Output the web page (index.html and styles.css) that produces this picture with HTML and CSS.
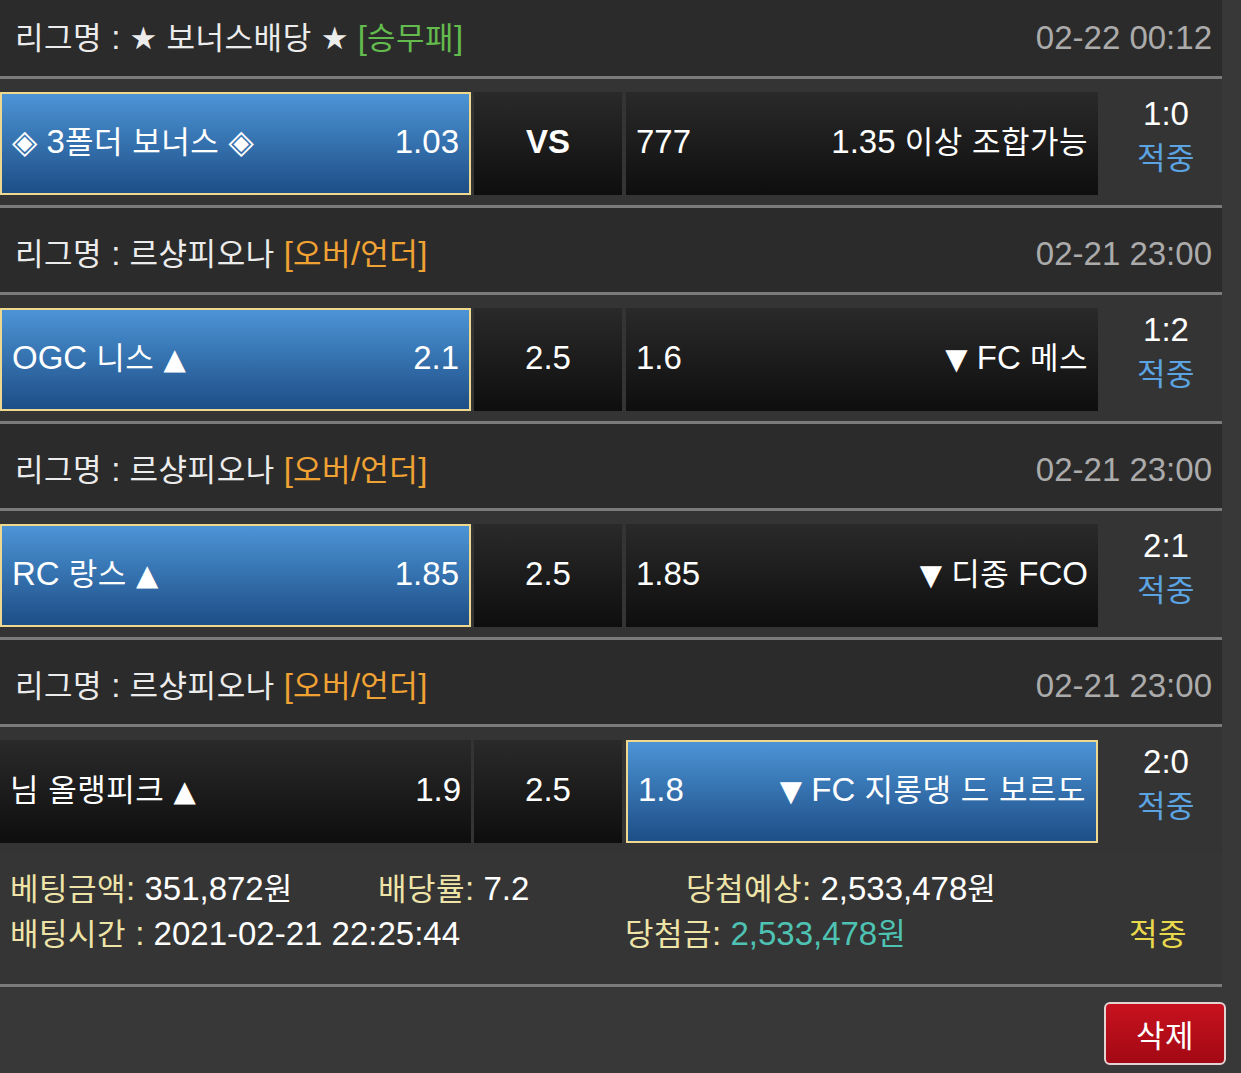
FILE: index.html
```html
<!DOCTYPE html>
<html lang="ko">
<head>
<meta charset="utf-8">
<title>베팅내역</title>
<link rel="stylesheet" href="styles.css">
</head>
<body>
<div class="wrap">
  <div class="league first">
    <div class="lname"><span class="k">리그명</span> : <span class="sym star">★</span> <span class="k">보너스배당</span> <span class="sym star">★</span> <span class="green">[<span class="k">승무패</span>]</span></div>
    <div class="ldate">02-22 00:12</div>
  </div>
  <div class="sep"></div>
  <div class="match">
    <div class="cell c1 sel"><span><span class="sym dia">◈</span> 3<span class="k">폴더 보너스</span> <span class="sym dia">◈</span></span><span>1.03</span></div>
    <div class="cell c2"><b>VS</b></div>
    <div class="cell c3"><span>777</span><span>1.35 <span class="k">이상 조합가능</span></span></div>
    <div class="res"><div>1:0</div><div class="blue"><span class="k">적중</span></div></div>
  </div>
  <div class="sep"></div>

  <div class="league">
    <div class="lname"><span class="k">리그명</span> : <span class="k">르샹피오나</span> <span class="orange">[<span class="k">오버</span>/<span class="k">언더</span>]</span></div>
    <div class="ldate">02-21 23:00</div>
  </div>
  <div class="sep"></div>
  <div class="match">
    <div class="cell c1 sel"><span>OGC <span class="k">니스</span> <span class="sym">▲</span></span><span>2.1</span></div>
    <div class="cell c2"><span>2.5</span></div>
    <div class="cell c3"><span>1.6</span><span><span class="sym">▼</span> FC <span class="k">메스</span></span></div>
    <div class="res"><div>1:2</div><div class="blue"><span class="k">적중</span></div></div>
  </div>
  <div class="sep"></div>

  <div class="league">
    <div class="lname"><span class="k">리그명</span> : <span class="k">르샹피오나</span> <span class="orange">[<span class="k">오버</span>/<span class="k">언더</span>]</span></div>
    <div class="ldate">02-21 23:00</div>
  </div>
  <div class="sep"></div>
  <div class="match">
    <div class="cell c1 sel"><span>RC <span class="k">랑스</span> <span class="sym">▲</span></span><span>1.85</span></div>
    <div class="cell c2"><span>2.5</span></div>
    <div class="cell c3"><span>1.85</span><span><span class="sym">▼</span> <span class="k">디종</span> FCO</span></div>
    <div class="res"><div>2:1</div><div class="blue"><span class="k">적중</span></div></div>
  </div>
  <div class="sep"></div>

  <div class="league">
    <div class="lname"><span class="k">리그명</span> : <span class="k">르샹피오나</span> <span class="orange">[<span class="k">오버</span>/<span class="k">언더</span>]</span></div>
    <div class="ldate">02-21 23:00</div>
  </div>
  <div class="sep"></div>
  <div class="match">
    <div class="cell c1"><span><span class="k">님 올랭피크</span> <span class="sym">▲</span></span><span>1.9</span></div>
    <div class="cell c2"><span>2.5</span></div>
    <div class="cell c3 sel"><span>1.8</span><span><span class="sym">▼</span> FC <span class="k">지롱댕 드 보르도</span></span></div>
    <div class="res"><div>2:0</div><div class="blue"><span class="k">적중</span></div></div>
  </div>

  <div class="summary">
    <div class="srow">
      <div class="s1a"><span class="lab"><span class="k">베팅금액</span>:</span> 351,872<span class="k">원</span></div>
      <div class="s1b"><span class="lab"><span class="k">배당률</span>:</span> 7.2</div>
      <div class="s1c"><span class="lab"><span class="k">당첨예상</span>:</span> 2,533,478<span class="k">원</span></div>
    </div>
    <div class="srow">
      <div class="s2a"><span class="lab"><span class="k">배팅시간</span> :</span> 2021-02-21 22:25:44</div>
      <div class="s2b"><span class="lab"><span class="k">당첨금</span>:</span> <span class="teal">2,533,478<span class="k">원</span></span></div>
      <div class="s2c"><span class="k yel">적중</span></div>
    </div>
  </div>
  <div class="sep"></div>
</div>
<div class="actions">
  <button class="btn" type="button"><span class="k">삭제</span></button>
</div>
</body>
</html>
```

FILE: styles.css
```css
body {
  margin: 0;
  background: #383838;
  color: #ffffff;
  font-family: "Liberation Sans", "Noto Sans CJK KR", sans-serif;
  font-size: 33px;
}

.k {
  font-family: "Noto Sans CJK KR", sans-serif;
  font-size: 31px;
  letter-spacing: 0.5px;
  line-height: 1;
}

.sym {
  font-family: "DejaVu Sans", sans-serif;
  font-size: 29px;
  line-height: 1;
}

.sym.dia {
  font-size: 33px;
}

.sym.star {
  font-size: 31px;
}

.wrap {
  width: 1222px;
}

.league {
  height: 84px;
  box-sizing: border-box;
  padding: 8px 10px 0 15px;
  background: #2b2b2b;
  display: flex;
  align-items: center;
  justify-content: space-between;
  line-height: 40px;
  color: #ececec;
  white-space: nowrap;
}

.league.first {
  height: 76px;
  padding-top: 0;
}

.ldate {
  color: #ababab;
}

.green {
  color: #63ba4d;
}

.orange {
  color: #f0a233;
}

.sep {
  height: 3px;
  background: #7b7b7b;
}

.match {
  height: 126px;
  box-sizing: border-box;
  padding: 13px 0 10px;
  background: #343434;
  display: flex;
}

.cell {
  height: 103px;
  box-sizing: border-box;
  display: flex;
  align-items: center;
  justify-content: space-between;
  padding: 0 10px 4px;
  background: linear-gradient(#2a2a2a, #0e0e0e);
  line-height: 40px;
  white-space: nowrap;
}

.c1 {
  width: 471px;
}

.c2 {
  width: 148px;
  margin-left: 3px;
  justify-content: center;
}

.c3 {
  width: 472px;
  margin-left: 4px;
}

.cell.sel {
  background: linear-gradient(#4c94d6, #1d4e86);
  border: 2px solid #eed88f;
  padding: 0 10px 4px;
}

.res {
  flex: 1;
  align-self: flex-start;
  padding-left: 12px;
  text-align: center;
  line-height: 44px;
}

.blue {
  color: #5ba3e1;
}

.summary {
  background: #353535;
  padding: 13px 0 28px 10px;
  line-height: 45px;
  white-space: nowrap;
}

.srow {
  display: flex;
}

.s1a {
  width: 368px;
}

.s1b {
  width: 308px;
}

.s2a {
  width: 615px;
}

.s2b {
  flex: 1;
}

.s2c {
  padding-right: 35px;
}

.lab {
  color: #efe4a8;
}

.teal {
  color: #4ec3b3;
}

.yel {
  color: #e8d84c;
}

.actions {
  display: flex;
  justify-content: flex-end;
  padding: 15px 15px 0 0;
}

.btn {
  width: 122px;
  height: 63px;
  box-sizing: border-box;
  border: 2px solid #e2d2d2;
  border-radius: 6px;
  background: linear-gradient(#c8111f, #a20914);
  color: #ffffff;
  display: flex;
  align-items: center;
  justify-content: center;
  padding: 0;
  line-height: 40px;
}
```
